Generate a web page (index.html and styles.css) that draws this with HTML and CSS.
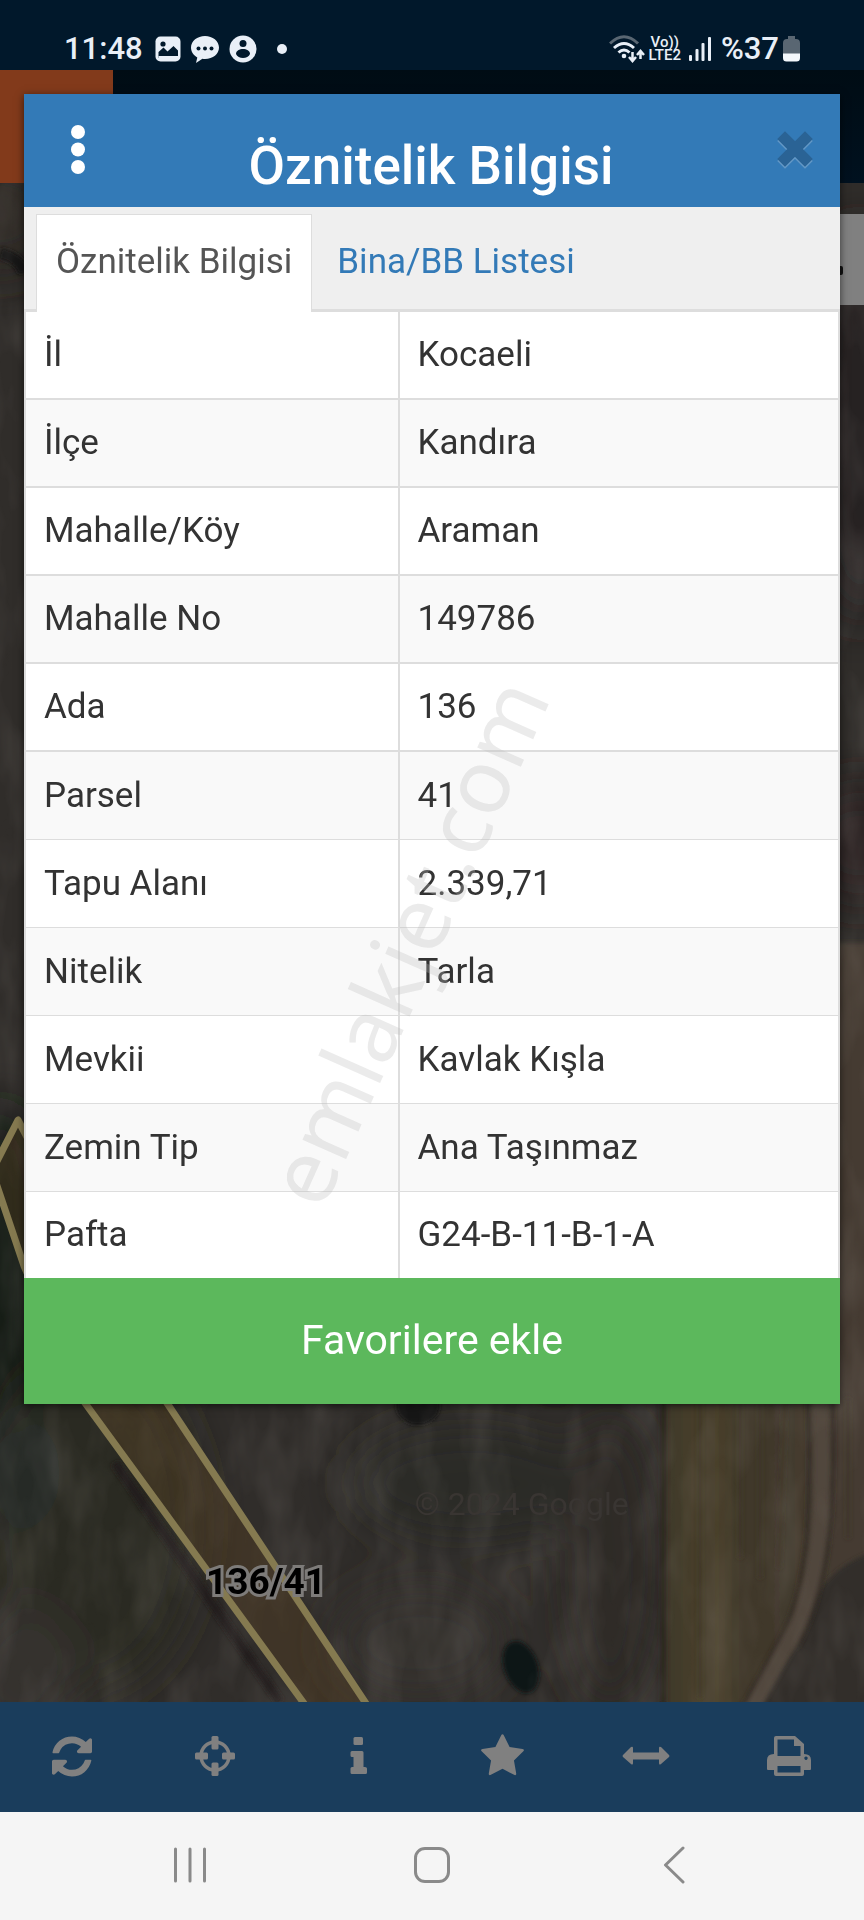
FILE: index.html
```html
<!DOCTYPE html>
<html lang="tr">
<head>
<meta charset="utf-8">
<meta name="viewport" content="width=device-width, initial-scale=1">
<title>Öznitelik Bilgisi</title>
<link rel="stylesheet" href="styles.css">
</head>
<body>
<div class="screen">
  <header class="status">
    <div class="status-left">
      <span class="clock">11:48</span>
      <svg width="26" height="26" viewBox="0 0 26 26" aria-hidden="true"><rect x="0.500" y="0.500" width="25" height="25" rx="5" fill="#e9eff7"/><circle cx="8" cy="8" r="2.600" fill="#01182b"/><path d="M3.500 19v-3l5-4.500 4 4 6-5.500 4.500 4.500V22h-19.500z" fill="#01182b"/><path d="M3.500 22v-2h19.500v2z" fill="#e9eff7"/></svg>
      <svg width="28" height="28" viewBox="0 0 28 28" aria-hidden="true"><path d="M14 1c7.700 0 14 5 14 11.500S22 24 14 24c-1 0-1.800 0-2.600-.2L5 28l1.300-5.600C2.500 20.300 0 16.700 0 12.500 0 6 6.300 1 14 1z" fill="#e9eff7"/><g fill="#01182b"><circle cx="7.500" cy="13.500" r="2"/><circle cx="14" cy="13.500" r="2"/><circle cx="20.500" cy="13.500" r="2"/></g></svg>
      <svg width="28" height="28" viewBox="0 0 28 28" aria-hidden="true"><circle cx="14" cy="14" r="13.500" fill="#e9eff7"/><circle cx="14" cy="8.500" r="3.500" fill="#01182b"/><path d="M7 19c0-3.500 3.500-5 7-5s7 1.500 7 5c-1 2.500-4 4-7 4s-6-1.500-7-4z" fill="#01182b"/></svg>
      <span class="more-dot"></span>
    </div>
    <div class="status-right">
      <svg width="36" height="28" viewBox="0 0 36 28" fill="none" aria-hidden="true"><path d="M1 8.500Q15-5 29 8.500" stroke="#596672" stroke-width="3"/><path d="M5 13q10-9 20 0M9.500 17.500q5.500-5 11 0" stroke="#e9eff7" stroke-width="3"/><circle cx="15" cy="21" r="2.300" fill="#e9eff7"/><path d="M23.500 17v8M20 22l3.500 4 3.500-4M31.500 24v-7M28 20l3.500-4 3.500 4" stroke="#e9eff7" stroke-width="2.500"/></svg>
      <span class="lte"><span>Vo))</span><span>LTE2</span></span>
      <svg class="bars" width="22" height="24" viewBox="0 0 22 24" fill="#e9eff7" aria-hidden="true"><rect x="0" y="18" width="3" height="6" rx="1"/><rect x="6.500" y="12" width="3" height="12" rx="1"/><rect x="12.500" y="6" width="3" height="18" rx="1"/><rect x="19" y="0" width="3" height="24" rx="1"/></svg>
      <span class="percent">%37</span>
      <svg width="17" height="26" viewBox="0 0 17 26" aria-hidden="true"><path d="M5 0h7v3h1a4 4 0 0 1 4 4v11H0V7a4 4 0 0 1 4-4h1z" fill="#596672"/><path d="M0 17.500h17V22a3.500 3.500 0 0 1-3.500 3.500h-10A3.500 3.500 0 0 1 0 22z" fill="#f4f8fc"/></svg>
    </div>
  </header>

  <div class="app">
    <div class="app-header"><div class="app-brand"></div></div>
    <div class="map">
      <svg class="map-art" viewBox="0 0 864 1519" preserveAspectRatio="none" aria-hidden="true">
        <defs>
          <filter id="soft" x="-30%" y="-30%" width="160%" height="160%"><feGaussianBlur stdDeviation="22"/></filter>
          <filter id="edge" x="-30%" y="-30%" width="160%" height="160%"><feGaussianBlur stdDeviation="2"/></filter>
          <filter id="grain" x="0" y="0" width="100%" height="100%"><feTurbulence type="fractalNoise" baseFrequency="0.03 0.012" numOctaves="3" seed="4"/><feColorMatrix values="0 0 0 0 0.400  0 0 0 0 0.360  0 0 0 0 0.330  0.300 0 0 0 -0.120"/></filter>
          <linearGradient id="field" x1="0" x2="1" y1="0" y2="0"><stop offset="0" stop-color="#3f3829"/><stop offset=".2" stop-color="#4a412d"/><stop offset=".38" stop-color="#3f372a"/><stop offset=".65" stop-color="#453c30"/><stop offset="1" stop-color="#443b32"/></linearGradient>
        </defs>
        <rect width="864" height="1519" fill="#302d2a"/>
        <g filter="url(#soft)">
          <ellipse cx="0" cy="30" rx="60" ry="60" fill="#2a2523"/>
          <ellipse cx="0" cy="1080" rx="50" ry="160" fill="#181a19"/>
          <ellipse cx="90" cy="1340" rx="110" ry="170" fill="#292a24"/>
          <ellipse cx="10" cy="1290" rx="50" ry="60" fill="#262b27"/>
          <ellipse cx="20" cy="1490" rx="60" ry="70" fill="#35302d"/>
          <ellipse cx="860" cy="240" rx="60" ry="200" fill="#272020"/>
          <ellipse cx="860" cy="660" rx="60" ry="60" fill="#292323"/>
          <ellipse cx="470" cy="1300" rx="120" ry="60" fill="#2c2927"/>
          <ellipse cx="610" cy="1380" rx="50" ry="150" fill="#2d2b26"/>
          <ellipse cx="420" cy="1460" rx="90" ry="60" fill="#35312e"/>
        </g>
        <path d="M828 760h60v780H664V1220h164z" fill="url(#field)" filter="url(#edge)"/>
        <path d="M870 1370q-56 20-66 80l-50 75h120z" fill="#332d2a" filter="url(#edge)"/>
        <g filter="url(#edge)" fill="none">
          <path d="M663 1220v300" stroke="#29261f" stroke-width="5"/>
          <path d="M820 1215c6 120-2 200-35 250l-33 60" stroke="#51473c" stroke-width="16"/>
          <path d="M808 1215c4 120 0 190-28 240l-38 70M832 1215c4 110-2 190-35 250" stroke="#2e2821" stroke-width="3"/>
          <path d="M740 1215v160M760 1215v180M785 1215l-6 170M848 1215v140M700 1215v300" stroke="#3e3528" stroke-width="3"/>
          <ellipse cx="418" cy="1222" rx="22" ry="20" fill="#161816"/>
          <ellipse cx="521" cy="1484" rx="17" ry="27" fill="#111516" transform="rotate(-20 521 1484)"/>
          <path d="M115 1280L280 1519" stroke="#221f1e" stroke-width="9"/>
          <path d="M0 70q20 5 24 20" stroke="#141212" stroke-width="12"/>
        </g>
        <rect width="864" height="1519" filter="url(#grain)"/>
        <path d="M18 937L-8 988 24 1083 85 1220 303 1519 330 1560 392 1560 365 1519 167 1220z" fill="#5a4122" fill-opacity=".38" stroke="#857a50" stroke-width="7" stroke-linejoin="round"/>
        <rect x="836" y="31" width="28" height="91" fill="#808080"/>
        <rect x="836" y="83" width="7" height="9" rx="2" fill="#111"/>
      </svg>
      <span class="map-credit">© 2024 Google</span>
      <span class="parcel-label">136/41</span>
    </div>

    <nav class="toolbar" aria-label="Harita araçları">
      <button type="button" aria-label="Yenile"><svg width="40" height="47" viewBox="0 0 1536 1792"><path d="M1511 1056q0 5-1 7-64 268-268 434.500t-478 166.500q-146 0-282.500-55t-243.500-157l-129 129q-19 19-45 19t-45-19-19-45v-448q0-26 19-45t45-19h448q26 0 45 19t19 45-19 45l-137 137q71 66 161 102t187 36q134 0 250-65t186-179q11-17 53-117 8-23 30-23h192q13 0 22.500 9.500t9.500 22.500zm25-800v448q0 26-19 45t-45 19h-448q-26 0-45-19t-19-45 19-45l138-138q-148-137-349-137-134 0-250 65t-186 179q-11 17-53 117-8 23-30 23h-199q-13 0-22.500-9.500t-9.500-22.500v-7q65-268 270-434.500t480-166.500q146 0 284 55.500t245 156.500l130-129q19-19 45-19t45 19 19 45z"/></svg></button>
      <button type="button" aria-label="Konum"><svg width="40" height="40" viewBox="0 0 40 40"><circle cx="20" cy="20" r="14" fill="none" stroke="#808080" stroke-width="3.500"/><rect x="16.500" y="0" width="7" height="13.500" rx="1.500"/><rect x="16.500" y="26.500" width="7" height="13.500" rx="1.500"/><rect x="0" y="16.500" width="13" height="7" rx="1.500"/><rect x="27" y="16.500" width="13" height="7" rx="1.500"/></svg></button>
      <button type="button" aria-label="Bilgi"><svg width="17" height="40" viewBox="0 0 17 40"><rect x="3.500" y="1" width="9.500" height="8" rx="1.500"/><path d="M1 15h11q1.500 0 1.500 1.500V31H15q2 0 2 1.500v4q0 1.500-1.500 1.500H2Q.5 38 .5 36.500v-4Q.5 31 2 31h1.500V21H2Q.5 21 .5 19.500v-3Q.5 15 2 15z"/></svg></button>
      <button type="button" aria-label="Favoriler"><svg width="43" height="47" viewBox="0 0 1664 1792"><path d="M1664 647q0 22-26 48l-363 354 86 500q1 7 1 20 0 21-10.500 35.500t-30.500 14.500q-19 0-40-12l-449-236-449 236q-22 12-40 12-21 0-31.500-14.500t-10.500-35.500q0-6 2-20l86-500-364-354q-25-27-25-48 0-37 56-46l502-73 225-455q19-41 49-41t49 41l225 455 502 73q56 9 56 46z"/></svg></button>
      <button type="button" aria-label="Ölçüm"><svg width="48" height="20" viewBox="0 0 48 20"><path d="M1 9l8-8q2-1 2 1v4.500h26V2q0-2 2-1l8 8q1 1 0 2l-8 7q-2 1.500-2-1v-3.500H11V17q0 2.500-2 1L1 11q-1-1 0-2z"/></svg></button>
      <button type="button" aria-label="Yazdır"><svg width="44" height="40" viewBox="0 0 44 40"><path fill-rule="evenodd" d="M9 0h19l9 8v10q7 0 7 6v9q0 1-1 1h-6v4q0 2-2 2H9q-2 0-2-2v-4H1q-1 0-1-1v-9q0-6 7-6V2q0-2 2-2zm1.500 3.500V20h23V10H27V3.500zm0 26.500v6.500h23V30zM39 20.500a1.700 1.700 0 1 0 .01 0z"/></svg></button>
    </nav>

    <div class="overlay">
      <section class="modal" role="dialog" aria-labelledby="modal-title">
        <header class="modal-head">
          <button type="button" class="menu" aria-label="Menü"><svg width="14" height="50" viewBox="0 0 14 50" fill="#fff"><circle cx="7" cy="7" r="7"/><circle cx="7" cy="24.500" r="7"/><circle cx="7" cy="42" r="7"/></svg></button>
          <h1 id="modal-title">Öznitelik Bilgisi</h1>
          <button type="button" class="close" aria-label="Kapat"><svg width="36" height="38" viewBox="0 0 36 38"><path d="M8 8L28 28M28 8L8 28" transform="translate(0 2)" stroke="#6398c6" stroke-width="11" stroke-linecap="square"/><path d="M8 8L28 28M28 8L8 28" stroke="#2a6395" stroke-width="11" stroke-linecap="square"/></svg></button>
        </header>
        <div class="tabs">
          <a class="tab active" href="#info">Öznitelik Bilgisi</a>
          <a class="tab" href="#list">Bina/BB Listesi</a>
        </div>
        <table class="info" id="info">
          <tbody>
            <tr><th scope="row">İl</th><td>Kocaeli</td></tr>
            <tr><th scope="row">İlçe</th><td>Kandıra</td></tr>
            <tr><th scope="row">Mahalle/Köy</th><td>Araman</td></tr>
            <tr><th scope="row">Mahalle No</th><td>149786</td></tr>
            <tr><th scope="row">Ada</th><td>136</td></tr>
            <tr><th scope="row">Parsel</th><td>41</td></tr>
            <tr><th scope="row">Tapu Alanı</th><td>2.339,71</td></tr>
            <tr><th scope="row">Nitelik</th><td>Tarla</td></tr>
            <tr><th scope="row">Mevkii</th><td>Kavlak Kışla</td></tr>
            <tr><th scope="row">Zemin Tip</th><td>Ana Taşınmaz</td></tr>
            <tr><th scope="row">Pafta</th><td>G24-B-11-B-1-A</td></tr>
          </tbody>
        </table>
        <button type="button" class="favorite">Favorilere ekle</button>
      </section>
    </div>
  </div>

  <nav class="system-nav" aria-label="Sistem">
    <button type="button" aria-label="Son uygulamalar"><svg width="34" height="36" viewBox="0 0 34 36"><path d="M2.500 2v32M17 2v32M31.500 2v32"/></svg></button>
    <button type="button" aria-label="Ana ekran"><svg width="36" height="36" viewBox="0 0 36 36"><rect x="1.500" y="1.500" width="33" height="33" rx="9.500"/></svg></button>
    <button type="button" aria-label="Geri"><svg width="22" height="38" viewBox="0 0 22 38"><path d="M20 2L2.500 19 20 36"/></svg></button>
  </nav>

  <div class="watermark" aria-hidden="true">emlakjet.com</div>
</div>
</body>
</html>
```
FILE: styles.css
```css
* { box-sizing: border-box; }

body {
  margin: 0;
  font-family: Roboto, "Noto Sans", sans-serif;
  color: #333;
}

button {
  display: grid;
  place-items: center;
  padding: 0;
  border: 0;
  background: none;
  font-family: inherit;
  cursor: pointer;
}

.screen {
  position: relative;
  display: flex;
  flex-direction: column;
  min-height: 100vh;
  overflow: hidden;
}

/* Status bar */
.status {
  display: flex;
  justify-content: space-between;
  align-items: flex-end;
  padding: 0 64px;
  height: 70px;
  background: #01182b;
  color: #e9eff7;
}

.status-left,
.status-right {
  display: flex;
  align-items: center;
  height: 42px;
}

.status-left { gap: 10px; }
.status-right { gap: 4px; }

.clock,
.percent {
  font-size: 31px;
  line-height: 40px;
  font-weight: 500;
}

.clock { margin-right: 2px; }
.percent { margin-left: 6px; }
.bars { margin-left: 4px; }

.more-dot {
  width: 10px;
  height: 10px;
  margin-left: 10px;
  border-radius: 50%;
  background: #e9eff7;
}

.lte {
  display: flex;
  flex-direction: column;
  align-items: center;
  font-size: 15px;
  line-height: 13px;
  font-weight: 500;
}

/* Application behind the dialog */
.app {
  position: relative;
  display: flex;
  flex-direction: column;
  flex: 1;
}

.app-header {
  height: 113px;
  background: linear-gradient(#000c14, #00111f);
}

.app-brand {
  width: 113px;
  height: 100%;
  background: #823a1b;
}

.map {
  position: relative;
  flex: 1;
  overflow: hidden;
  background: #302d2a;
}

.map-art {
  position: absolute;
  inset: 0;
  width: 100%;
  height: 100%;
}

.map-credit,
.parcel-label {
  position: absolute;
  line-height: 40px;
}

.map-credit {
  left: 48%;
  bottom: 178px;
  font-size: 32px;
  color: #393532;
}

.parcel-label {
  left: 206px;
  bottom: 100px;
  font-size: 37px;
  font-weight: 700;
  color: #000;
  -webkit-text-stroke: 6px #7d7b79;
  paint-order: stroke fill;
}

.toolbar {
  display: grid;
  grid-template-columns: repeat(6, 1fr);
  height: 110px;
  padding: 0 3px 2px 0;
  background: #1a3d5c;
}

.toolbar svg { fill: #808080; }

/* Dialog */
.overlay {
  position: absolute;
  inset: 0;
  padding: 24px;
}

.modal {
  display: flex;
  flex-direction: column;
  background: #fff;
  box-shadow: 0 2px 8px rgba(0, 0, 0, 0.6);
}

.modal-head {
  display: flex;
  justify-content: space-between;
  align-items: center;
  height: 113px;
  padding: 0 27px 2px 47px;
  background: #337ab7;
}

.modal-head h1 {
  margin: 0;
  padding-top: 32px;
  font-size: 53px;
  line-height: 60px;
  font-weight: 500;
  color: #fff;
}

.tabs {
  display: flex;
  gap: 5px;
  height: 105px;
  padding: 7px 12px 0;
  border-bottom: 3px solid #ddd;
  background: #efefef;
}

.tab {
  height: 98px;
  padding: 0 19px;
  border: 1px solid transparent;
  border-bottom: 0;
  font-size: 35px;
  line-height: 94px;
  color: #337ab7;
  text-decoration: none;
}

.tab.active {
  border-color: #ddd;
  background: #fff;
  color: #555;
}

.info {
  width: 100%;
  border: solid #ddd;
  border-width: 0 2px;
  border-spacing: 0;
  font-size: 35px;
  line-height: 48px;
}

.info th,
.info td {
  height: 88px;
  padding: 0 18px;
  border-bottom: 2px solid #ddd;
  font-weight: 400;
  text-align: left;
}

.info th {
  width: 46%;
  border-right: 2px solid #ddd;
}

.info tr:nth-child(even) { background: #f9f9f9; }
.info tr:nth-child(n + 6) > * { border-bottom-width: 1px; }

.info tr:last-child > * {
  height: 86px;
  border-bottom: 0;
}

.favorite {
  height: 126px;
  padding-bottom: 2px;
  background: #5cb85c;
  color: #fff;
  font-size: 41px;
  line-height: 48px;
}

/* System navigation */
.system-nav {
  display: grid;
  grid-template-columns: repeat(3, 1fr);
  height: 108px;
  padding: 0 69px 2px;
  background: #f5f5f5;
}

.system-nav svg {
  fill: none;
  stroke: #8a8a8a;
  stroke-width: 3;
  stroke-linecap: round;
  stroke-linejoin: round;
}

.watermark {
  position: absolute;
  left: 47%;
  top: 49%;
  translate: -50% -50%;
  rotate: -66deg;
  font-family: "Noto Sans", sans-serif;
  font-size: 89px;
  line-height: 96px;
  color: rgba(190, 190, 190, 0.3);
  pointer-events: none;
}
```
